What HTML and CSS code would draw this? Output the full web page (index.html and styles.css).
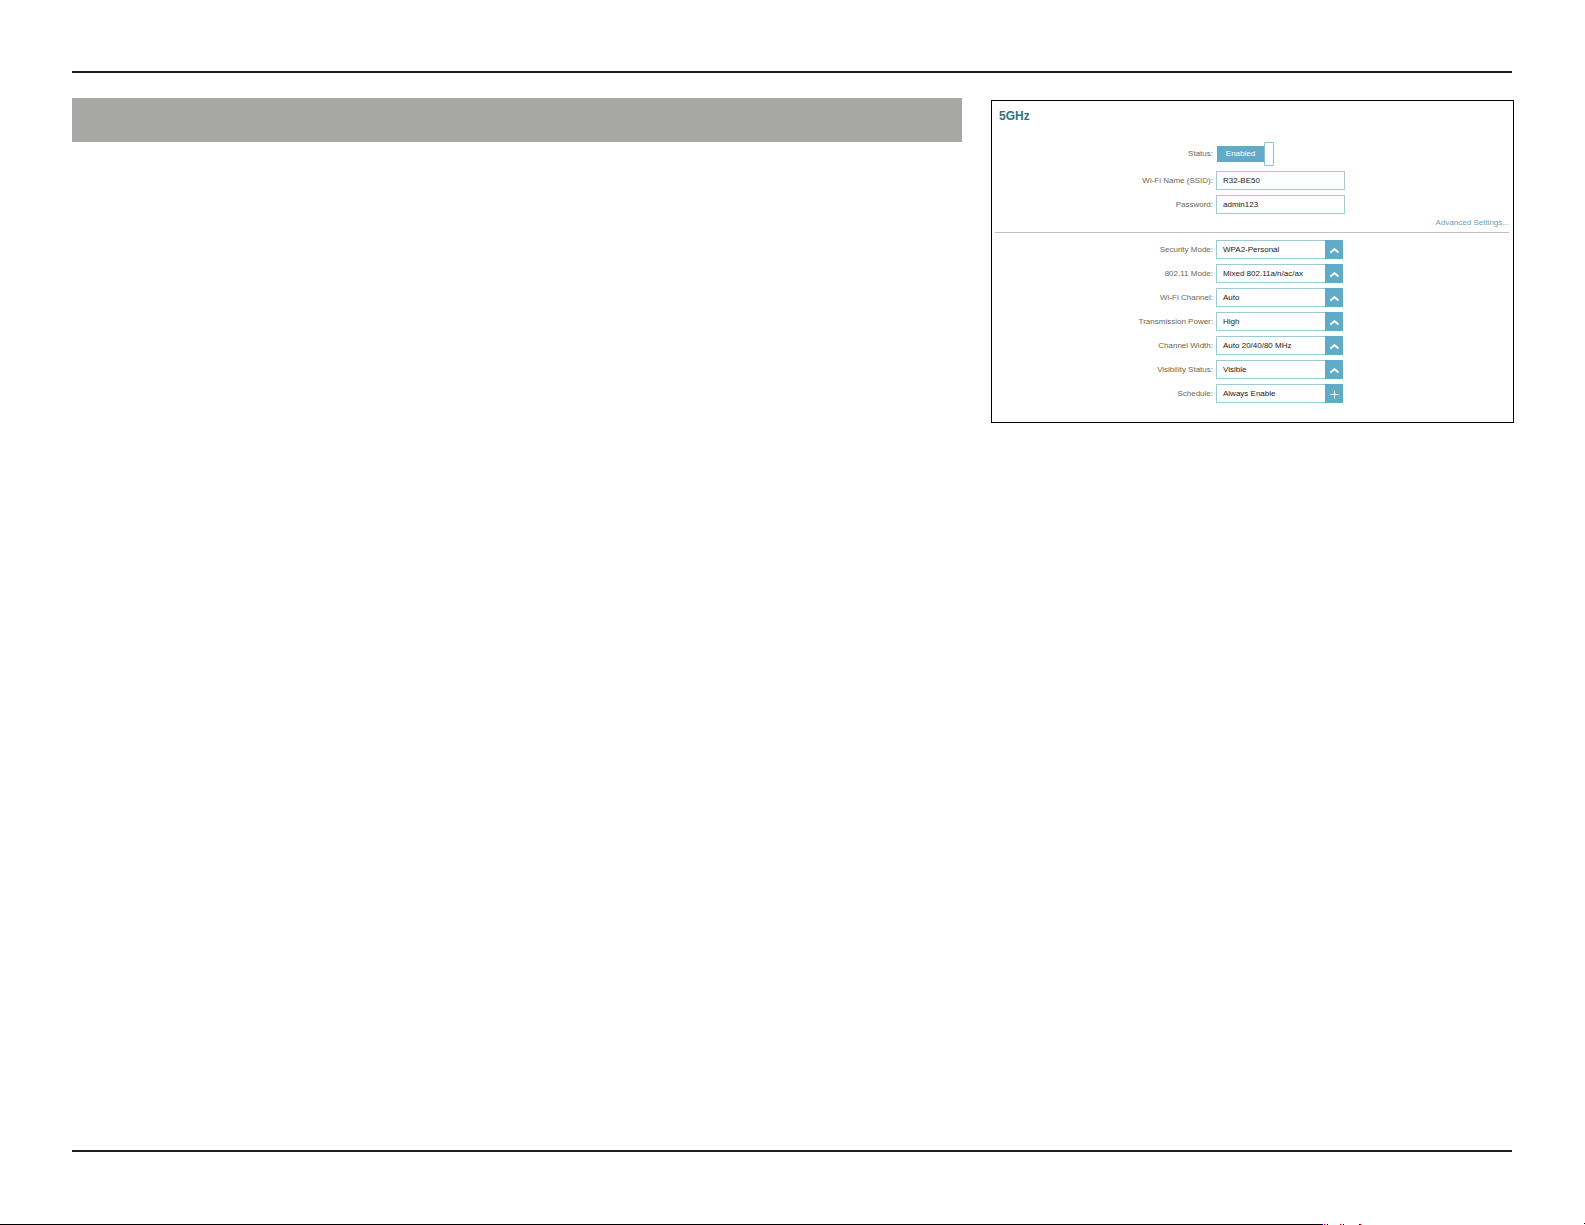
FILE: index.html
```
<!DOCTYPE html>
<html lang="en">
<head>
    <meta charset="UTF-8">
    <title>5GHz Wi-Fi Settings</title>
    <link rel="stylesheet" href="styles.css">
</head>
<body>

<div class="page">
    <hr class="page-rule">

    <div class="content">
        <div class="title-bar"></div>

        <form class="panel">
            <h2>5GHz</h2>

            <div class="form-group">
                <label for="status">Status:</label>
                <button type="button" class="toggle" id="status" aria-pressed="true">
                    <span class="toggle-text">Enabled</span>
                    <span class="toggle-knob"></span>
                </button>
            </div>
            <div class="form-group">
                <label for="ssid">Wi-Fi Name (SSID):</label>
                <input type="text" id="ssid" value="R32-BE50">
            </div>
            <div class="form-group">
                <label for="password">Password:</label>
                <input type="text" id="password" value="admin123">
            </div>

            <div class="advanced">
                <a href="#advanced">Advanced Settings...</a>
            </div>

            <div class="form-group">
                <label for="security">Security Mode:</label>
                <div class="select">
                    <select id="security"><option>WPA2-Personal</option></select>
                    <svg viewBox="0 0 18 19"><path d="M5.5 12.5 L9.5 9 L13.5 12.5"/></svg>
                </div>
            </div>
            <div class="form-group">
                <label for="mode">802.11 Mode:</label>
                <div class="select">
                    <select id="mode"><option>Mixed 802.11a/n/ac/ax</option></select>
                    <svg viewBox="0 0 18 19"><path d="M5.5 12.5 L9.5 9 L13.5 12.5"/></svg>
                </div>
            </div>
            <div class="form-group">
                <label for="channel">Wi-Fi Channel:</label>
                <div class="select">
                    <select id="channel"><option>Auto</option></select>
                    <svg viewBox="0 0 18 19"><path d="M5.5 12.5 L9.5 9 L13.5 12.5"/></svg>
                </div>
            </div>
            <div class="form-group">
                <label for="power">Transmission Power:</label>
                <div class="select">
                    <select id="power"><option>High</option></select>
                    <svg viewBox="0 0 18 19"><path d="M5.5 12.5 L9.5 9 L13.5 12.5"/></svg>
                </div>
            </div>
            <div class="form-group">
                <label for="width">Channel Width:</label>
                <div class="select">
                    <select id="width"><option>Auto 20/40/80 MHz</option></select>
                    <svg viewBox="0 0 18 19"><path d="M5.5 12.5 L9.5 9 L13.5 12.5"/></svg>
                </div>
            </div>
            <div class="form-group">
                <label for="visibility">Visibility Status:</label>
                <div class="select">
                    <select id="visibility"><option>Visible</option></select>
                    <svg viewBox="0 0 18 19"><path d="M5.5 12.5 L9.5 9 L13.5 12.5"/></svg>
                </div>
            </div>
            <div class="form-group">
                <label for="schedule">Schedule:</label>
                <div class="select">
                    <select id="schedule"><option>Always Enable</option></select>
                    <svg viewBox="0 0 18 19"><path class="plus" d="M5.5 10.5 H13.5 M9.5 6.5 V14.5"/></svg>
                </div>
            </div>
        </form>
    </div>

    <hr class="page-rule bottom">
</div>

<div class="page-edge">
    <div class="edge-line"></div>
    <svg viewBox="0 0 263 2" shape-rendering="crispEdges">
        <path fill="#00f" d="M0 1h1v1h-1z"/>
        <path fill="#c00" d="M2 1h1v1h-1z M18 1h1v1h-1z M38 1h1v1h-1z"/>
        <path fill="#0ff" d="M3 1h1v1h-1z M19 1h1v1h-1z M39 1h1v1h-1z"/>
        <path fill="#000" d="M5 1h1v1h-1z M21 1h1v1h-1z M37 1h1v1h-1z M262 0h1v1h-1z"/>
    </svg>
</div>

</body>
</html>
```
FILE: styles.css
```
* {
    box-sizing: border-box;
}
body {
    font-family: "Liberation Sans", Arial, sans-serif;
    font-size: 8px;
    margin: 0;
    min-height: 100vh;
    display: flex;
    flex-direction: column;
    background: #fff;
}
.page {
    flex: 1;
    display: flex;
    flex-direction: column;
    padding: 71px 71px 0 72px;
}
.page-rule {
    width: auto;
    height: 2px;
    margin: 0 2px 0 0;
    border: none;
    background: #231f20;
}
.page-rule.bottom {
    margin-top: auto;
    margin-bottom: 71px;
}
.content {
    display: grid;
    grid-template-columns: 890fr 523fr;
    column-gap: 29px;
    align-items: start;
    padding-top: 25px;
}
.title-bar {
    height: 44px;
    background: #a7a7a5;
}
.panel {
    margin-top: 2px;
    padding: 8px 4px 14px 3px;
    border: 1px solid #000;
}
h2 {
    margin: 0 0 19px;
    padding-left: 4px;
    color: #2f727b;
    font-size: 12px;
    line-height: 14px;
}
.form-group {
    display: grid;
    grid-template-columns: 218fr 293fr;
    column-gap: 3px;
    align-items: center;
    margin-bottom: 5px;
}
label {
    color: #6b6858;
    text-align: right;
    line-height: 10px;
}
input, select {
    font-family: inherit;
    font-size: 8px;
    color: #222;
    background: #fff;
}
input {
    width: 129px;
    height: 19px;
    padding: 0 6px;
    border: 1px solid #a3cbcd;
    border-radius: 0;
}
.toggle {
    display: flex;
    align-items: center;
    justify-self: start;
    padding: 0 0 0 1px;
    border: none;
    background: none;
    color: #fff;
    font-family: inherit;
    font-size: 8px;
}
.toggle-text {
    width: 47px;
    line-height: 16px;
    background: #62abc8;
    text-align: center;
}
.toggle-knob {
    width: 10px;
    height: 24px;
    border: 1px solid #8cc3d3;
    border-radius: 1px;
    background: #fff;
}
.advanced {
    display: flex;
    justify-content: flex-end;
    margin-bottom: 7px;
    padding-bottom: 5px;
    border-bottom: 1px solid #bcbfc0;
}
.advanced a {
    color: #62a5b9;
    line-height: 8px;
    text-decoration: none;
}
.select {
    display: flex;
    width: 127px;
    height: 19px;
}
select {
    flex: 1;
    min-width: 0;
    padding: 0 6px;
    border: 1px solid #9dcad2;
    border-right: none;
    border-radius: 0;
    appearance: none;
}
.select svg {
    width: 18px;
    height: 19px;
    background: #62abc8;
    fill: none;
    stroke: #fff;
    stroke-width: 2;
    pointer-events: none;
}
.select .plus {
    stroke-width: 1;
}
.page-edge {
    display: flex;
    align-items: flex-end;
}
.edge-line {
    flex: 1;
    height: 1px;
    background: #000;
}
.page-edge svg {
    width: 263px;
    height: 2px;
}
```
